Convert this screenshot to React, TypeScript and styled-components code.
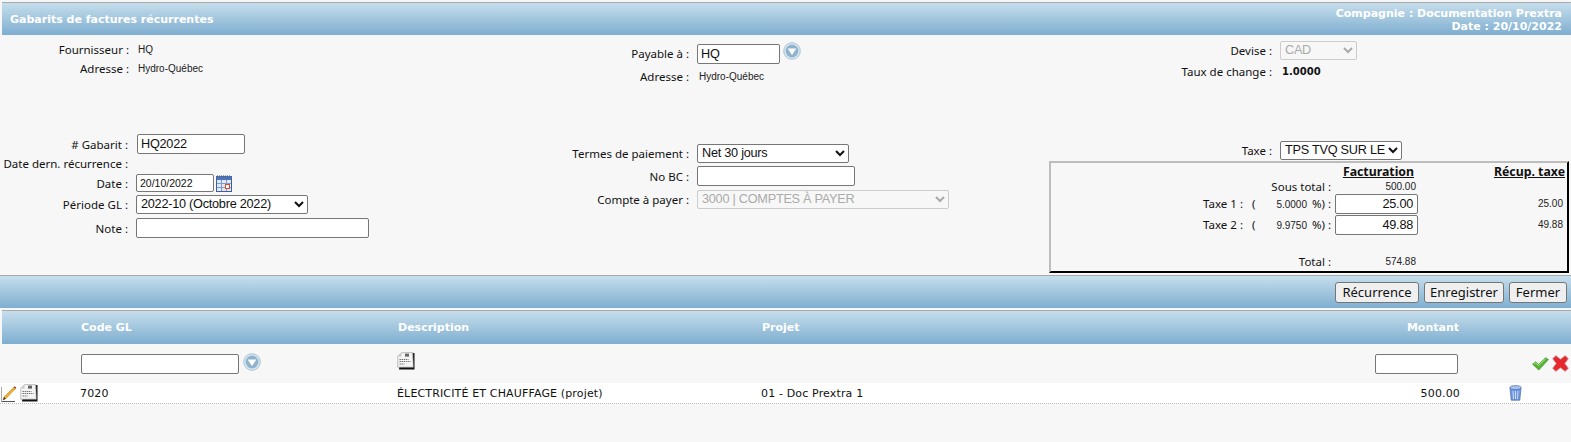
import styled, { createGlobalStyle, css } from "styled-components";

const labelFont = `"Noto Sans", "Open Sans", sans-serif`;
const arial = `"Liberation Sans", Arial, sans-serif`;
const verdana = `"DejaVu Sans", Verdana, sans-serif`;

const GlobalStyle = createGlobalStyle`
  html, body { margin: 0; padding: 0; background: #f7f7f7; }
  body { height: 442px; overflow: hidden; color: #111; font-family: ${labelFont}; font-size: 11.5px; }
`;

const bar = css`
  background: linear-gradient(#c6deec, #7eaed0);
  border-top: 1px solid #a9a9a9;
  color: #fff;
  font-family: ${verdana};
  font-size: 11px;
  font-weight: 700;
`;

const Page = styled.div`
  padding-top: 2px;
`;

const TitleBar = styled.header`
  ${bar}
  height: 32px;
  margin-left: 2px;
  padding: 0 9px 0 8px;
  display: flex;
  justify-content: space-between;
  align-items: center;
`;

const Company = styled.div`
  text-align: right;
  line-height: 13px;
  margin-top: 2px;
`;

const FormGrid = styled.section`
  height: 238px;
  display: grid;
  grid-template-columns: 520px 530px 1fr;
`;

const Column = styled.div`
  display: flex;
  flex-direction: column;
`;

const Block = styled.div<{ $top: number }>`
  margin-top: ${(p) => p.$top}px;
`;

const Field = styled.div<{ $h: number; $gap?: number }>`
  height: ${(p) => p.$h}px;
  margin-bottom: ${(p) => p.$gap ?? 0}px;
  display: flex;
  align-items: center;
`;

const Label = styled.label<{ $w: number }>`
  width: ${(p) => p.$w}px;
  margin-right: 8px;
  text-align: right;
  white-space: nowrap;
  flex: none;
`;

const Small = styled.span`
  font-family: ${arial};
  font-size: 10px;
  color: #222;
`;

const Value = styled(Small)<{ $ml?: number }>`
  margin-left: ${(p) => p.$ml ?? 2}px;
`;

const Rate = styled.span`
  margin-left: 2px;
  font-family: ${verdana};
  font-size: 10px;
  font-weight: 700;
`;

const Input = styled.input<{ $w: number; $h?: number; $right?: boolean; $ml?: number }>`
  box-sizing: border-box;
  width: ${(p) => p.$w}px;
  height: ${(p) => p.$h ?? 20}px;
  margin: 0 0 0 ${(p) => p.$ml ?? 0}px;
  padding: 1px 4px 1px 3px;
  background: #fff;
  border: 1px solid #767676;
  border-radius: 2px;
  font-family: ${arial};
  font-size: 12.7px;
  letter-spacing: -0.25px;
  color: #111;
  text-align: ${(p) => (p.$right ? "right" : "left")};
`;

const DateInput = styled(Input)`
  font-size: 10.5px;
  letter-spacing: 0;
  height: 18px;
`;

const Select = styled.select<{ $w: number }>`
  box-sizing: border-box;
  width: ${(p) => p.$w}px;
  height: 19px;
  margin: 0;
  background: #fff;
  border-radius: 2px;
  font-family: ${arial};
  font-size: 12.7px;
  letter-spacing: -0.25px;
  color: #111;
  &:disabled {
    background: #f7f7f7;
    color: #aaa;
    border: 1px solid #ccc;
    opacity: 1;
  }
`;

const IconSlot = styled.span<{ $ml?: number; $mt?: number }>`
  display: inline-flex;
  margin-left: ${(p) => p.$ml ?? 0}px;
  margin-top: ${(p) => p.$mt ?? 0}px;
  flex: none;
`;

const TaxBox = styled.div`
  box-sizing: border-box;
  height: 112px;
  width: 520px;
  margin-left: -1px;
  padding: 1px 2px 0 0;
  border-style: solid;
  border-width: 2px;
  border-color: #bdbdbd #000 #000 #bdbdbd;
  display: grid;
  grid-template-columns: 284px 85px 1fr;
  grid-template-rows: 15px 14px 21px 21px 19px 15px;
  align-items: center;
`;

const BoxHead = styled.div<{ $col: number }>`
  grid-column: ${(p) => p.$col};
  grid-row: 1;
  font-size: 12.3px;
  font-weight: 700;
  text-decoration: underline;
  text-align: right;
  padding-right: ${(p) => (p.$col === 2 ? 6 : 0)}px;
`;

const BoxLabel = styled.div`
  grid-column: 1;
  text-align: right;
  white-space: nowrap;
  padding-right: 4px;
`;

const TaxLabel = styled(BoxLabel)`
  display: grid;
  grid-template-columns: 1fr 22px 33px 28px;
  text-align: left;
  padding-right: 0;
`;

const Lead = styled.span`
  text-align: right;
  padding-right: 9px;
`;

const Pct = styled.span`
  text-align: right;
  white-space: nowrap;
`;

const PctSign = styled(Pct)`
  padding-right: 4px;
`;

const BoxAmount = styled(Small)`
  grid-column: 2;
  text-align: right;
  padding-right: 4px;
`;

const Recup = styled(Small)`
  grid-column: 3;
  text-align: right;
  padding-right: 2px;
`;

const Toolbar = styled.div`
  ${bar}
  box-sizing: border-box;
  height: 33px;
  margin-top: 2px;
  padding: 0 4px 0 0;
  display: flex;
  justify-content: flex-end;
  align-items: center;
  gap: 5px;
`;

const Button = styled.button<{ $w: number }>`
  box-sizing: border-box;
  width: ${(p) => p.$w}px;
  height: 21px;
  padding: 0;
  background: #efefef;
  border: 1px solid #767676;
  border-radius: 3px;
  color: #111;
  font-family: ${labelFont};
  font-size: 13px;
  line-height: 18px;
`;

const columns = "78px 317px 364px 500px 198px 1fr";

const ListHead = styled.div`
  ${bar}
  box-sizing: border-box;
  height: 34px;
  margin: 2px 0 0 2px;
  display: grid;
  grid-template-columns: ${columns};
  align-items: center;
`;

const HeadCell = styled.div<{ $right?: boolean }>`
  text-align: ${(p) => (p.$right ? "right" : "left")};
  margin: -1px 0 0 1px;
`;

const EntryRow = styled.div`
  height: 39px;
  margin-left: 2px;
  display: grid;
  grid-template-columns: ${columns};
  align-items: center;
`;

const EntryCell = styled.div<{ $right?: boolean }>`
  display: flex;
  align-items: center;
  justify-content: ${(p) => (p.$right ? "flex-end" : "flex-start")};
`;

const AmountEntry = styled(EntryCell)`
  padding-right: 1px;
`;

const EntryActions = styled(EntryCell)`
  justify-content: flex-end;
  gap: 3px;
  padding-right: 2px;
`;

const DataRow = styled.div`
  box-sizing: border-box;
  height: 21px;
  padding: 1px 0 0 2px;
  background: #fff;
  border-bottom: 1px dotted #bbb;
  display: grid;
  grid-template-columns: ${columns};
  align-items: center;
  font-family: ${verdana};
  font-size: 11px;
  letter-spacing: 0.15px;
  color: #111;
`;

const RowIcons = styled.div`
  display: flex;
  align-items: center;
  gap: 3px;
  margin: -1px 0 0 -1px;
`;

const Amount = styled.div`
  text-align: right;
  margin-right: -1px;
`;

const TrashCell = styled.div`
  display: flex;
  padding-left: 50px;
  margin-top: -1px;
`;

function Lookup() {
  return (
    <svg width="18" height="18" viewBox="0 0 18 18">
      <circle cx="9" cy="9" r="8.3" fill="#dbe7f0" stroke="#a9c4d8" />
      <circle cx="9" cy="9" r="6.4" fill="#8fb3cd" />
      <path d="M4.6 6.6h8.8L9 13z" fill="#fff" />
    </svg>
  );
}

function Calendar() {
  return (
    <svg width="16" height="17" viewBox="0 0 16 17">
      <rect x="0.5" y="1.5" width="15" height="15" fill="#dfe9f6" stroke="#3f5f95" />
      <rect x="0.5" y="1" width="15" height="4" fill="#4d74b5" />
      <path d="M1 1h14" stroke="#555" strokeDasharray="1 1" />
      <path d="M5.5 5v11M10.5 5v11M1 8.5h14M1 12.5h14" stroke="#7f9ccb" />
      <rect x="9.5" y="9.5" width="4" height="4" fill="#fff" stroke="#e0492a" />
    </svg>
  );
}

function Doc() {
  return (
    <svg width="18" height="18" viewBox="0 0 18 18">
      <path d="M4 1h13.5v16.5H2z" fill="#111" />
      <path d="M4.5 0.6h11.2l.6 14.6H.7L.8 4.4z" fill="#f4f4f4" stroke="#999" strokeWidth=".6" />
      <path d="M.8 4.4L4.5 4.4V.6z" fill="#ccc" />
      <rect x="8" y="1.6" width="4" height="3" fill="#666" />
      <path d="M2.5 7.5h9M2.5 9.5h11M2.5 12h5" stroke="#777" strokeDasharray="1.5 .6" />
    </svg>
  );
}

function Pencil() {
  return (
    <svg width="16" height="17" viewBox="0 0 16 17">
      <path d="M.5 2v14.5H14" fill="none" stroke="#aaa" />
      <path d="M.5 16.5H14" stroke="#555" />
      <path d="M2 15l1-3L12.8 2.2l1.6 1.5L4.8 13.8z" fill="#eeb02a" stroke="#b9811c" strokeWidth=".5" />
      <path d="M12.8 2.2l1.6 1.5 .9-1-1.6-1.5z" fill="#8a2a1a" />
      <path d="M2 15l1-3 1.8 1.8z" fill="#333" />
    </svg>
  );
}

function Check() {
  return (
    <svg width="17" height="14" viewBox="0 0 17 14">
      <path d="M.6 7.2l3-2.4 3 2.6L13.6.8 16.4 2.6 6.8 13z" fill="#55b531" stroke="#3e8f26" strokeWidth=".7" />
      <path d="M2 7l1.6-1.2 3 2.6 7-6.4" fill="none" stroke="#a8e58a" />
    </svg>
  );
}

function Cross() {
  return (
    <svg width="17" height="17" viewBox="0 0 17 17">
      <path d="M3.8 .6L8.5 4.2 13.2 .6l3.2 3.2-3.6 4.7 3.6 4.7-3.2 3.2-4.7-3.6-4.7 3.6L.6 13.2l3.6-4.7L.6 3.8z" fill="#e8262d" stroke="#c9a8a8" strokeWidth=".8" />
    </svg>
  );
}

function Trash() {
  return (
    <svg width="13" height="16" viewBox="0 0 13 16">
      <path d="M1 3l1.2 12.2h8.6L12 3z" fill="#6f97de" stroke="#4a6cb0" strokeWidth=".7" />
      <ellipse cx="6.5" cy="2.6" rx="5.8" ry="2" fill="#a9c4ee" stroke="#4a6cb0" strokeWidth=".7" />
      <path d="M4 6l.5 8M6.5 6v8M9 6l-.5 8" stroke="#c9dafa" />
    </svg>
  );
}

export default function App() {
  return (
    <Page>
      <GlobalStyle />
      <TitleBar>
        <span>Gabarits de factures récurrentes</span>
        <Company>
          Compagnie : Documentation Prextra
          <br />
          Date : 20/10/2022
        </Company>
      </TitleBar>

      <FormGrid>
        <Column>
          <Block $top={5}>
            <Field $h={19}>
              <Label $w={129}>Fournisseur :</Label>
              <Value $ml={1}>HQ</Value>
            </Field>
            <Field $h={19}>
              <Label $w={129}>Adresse :</Label>
              <Value $ml={1}>Hydro-Québec</Value>
            </Field>
          </Block>
          <Block $top={56}>
            <Field $h={20}>
              <Label $w={128}># Gabarit :</Label>
              <Input $w={108} $ml={1} defaultValue="HQ2022" />
            </Field>
            <Field $h={19}>
              <Label $w={128}>Date dern. récurrence :</Label>
            </Field>
            <Field $h={20}>
              <Label $w={128}>Date :</Label>
              <DateInput $w={78} defaultValue="20/10/2022" />
              <IconSlot $ml={2}>
                <Calendar />
              </IconSlot>
            </Field>
            <Field $h={22} $gap={2}>
              <Label $w={128}>Période GL :</Label>
              <Select $w={172} defaultValue="p">
                <option value="p">2022-10 (Octobre 2022)</option>
              </Select>
            </Field>
            <Field $h={22}>
              <Label $w={128}>Note :</Label>
              <Input $w={233} />
            </Field>
          </Block>
        </Column>

        <Column>
          <Block $top={8}>
            <Field $h={21} $gap={2}>
              <Label $w={169}>Payable à :</Label>
              <Input $w={83} defaultValue="HQ" />
              <IconSlot $ml={3} $mt={-6}>
                <Lookup />
              </IconSlot>
            </Field>
            <Field $h={20}>
              <Label $w={169}>Adresse :</Label>
              <Value>Hydro-Québec</Value>
            </Field>
          </Block>
          <Block $top={57}>
            <Field $h={20} $gap={2}>
              <Label $w={169}>Termes de paiement :</Label>
              <Select $w={152} defaultValue="n">
                <option value="n">Net 30 jours</option>
              </Select>
            </Field>
            <Field $h={22} $gap={2}>
              <Label $w={169}>No BC :</Label>
              <Input $w={158} />
            </Field>
            <Field $h={20}>
              <Label $w={169}>Compte à payer :</Label>
              <Select $w={252} disabled defaultValue="c">
                <option value="c">3000 | COMPTES À PAYER</option>
              </Select>
            </Field>
          </Block>
        </Column>

        <Column>
          <Block $top={5}>
            <Field $h={20} $gap={1}>
              <Label $w={222}>Devise :</Label>
              <Select $w={77} disabled defaultValue="c">
                <option value="c">CAD</option>
              </Select>
            </Field>
            <Field $h={20}>
              <Label $w={222}>Taux de change :</Label>
              <Rate>1.0000</Rate>
            </Field>
          </Block>
          <Block $top={59}>
            <Field $h={20} $gap={1}>
              <Label $w={222}>Taxe :</Label>
              <Select $w={122} defaultValue="t">
                <option value="t">TPS TVQ SUR LES ACHATS</option>
              </Select>
            </Field>
            <TaxBox>
              <BoxHead $col={2}>Facturation</BoxHead>
              <BoxHead $col={3}>Récup. taxe</BoxHead>
              <BoxLabel style={{ gridRow: 2 }}>Sous total :</BoxLabel>
              <BoxAmount style={{ gridRow: 2 }}>500.00</BoxAmount>
              <TaxLabel style={{ gridRow: 3 }}>
                <Lead>Taxe 1 :</Lead>
                <span>(</span>
                <Pct>
                  <Small>5.0000</Small>
                </Pct>
                <PctSign>%) :</PctSign>
              </TaxLabel>
              <Input $w={83} $h={20} $right defaultValue="25.00" style={{ gridColumn: 2, gridRow: 3 }} />
              <Recup style={{ gridRow: 3 }}>25.00</Recup>
              <TaxLabel style={{ gridRow: 4 }}>
                <Lead>Taxe 2 :</Lead>
                <span>(</span>
                <Pct>
                  <Small>9.9750</Small>
                </Pct>
                <PctSign>%) :</PctSign>
              </TaxLabel>
              <Input $w={83} $h={20} $right defaultValue="49.88" style={{ gridColumn: 2, gridRow: 4 }} />
              <Recup style={{ gridRow: 4 }}>49.88</Recup>
              <BoxLabel style={{ gridRow: 6 }}>Total :</BoxLabel>
              <BoxAmount style={{ gridRow: 6 }}>574.88</BoxAmount>
            </TaxBox>
          </Block>
        </Column>
      </FormGrid>

      <Toolbar>
        <Button $w={84}>Récurrence</Button>
        <Button $w={80}>Enregistrer</Button>
        <Button $w={58}>Fermer</Button>
      </Toolbar>

      <ListHead>
        <span />
        <HeadCell>Code GL</HeadCell>
        <HeadCell>Description</HeadCell>
        <HeadCell>Projet</HeadCell>
        <HeadCell $right>Montant</HeadCell>
        <span />
      </ListHead>

      <EntryRow>
        <span />
        <EntryCell>
          <Input $w={158} $ml={1} />
          <IconSlot $ml={4} $mt={-4}>
            <Lookup />
          </IconSlot>
        </EntryCell>
        <EntryCell>
          <IconSlot $mt={-5}>
            <Doc />
          </IconSlot>
        </EntryCell>
        <span />
        <AmountEntry $right>
          <Input $w={83} />
        </AmountEntry>
        <EntryActions>
          <Check />
          <Cross />
        </EntryActions>
      </EntryRow>

      <DataRow>
        <RowIcons>
          <Pencil />
          <Doc />
        </RowIcons>
        <span>7020</span>
        <span>ÉLECTRICITÉ ET CHAUFFAGE (projet)</span>
        <span>01 - Doc Prextra 1</span>
        <Amount>500.00</Amount>
        <TrashCell>
          <Trash />
        </TrashCell>
      </DataRow>
    </Page>
  );
}
